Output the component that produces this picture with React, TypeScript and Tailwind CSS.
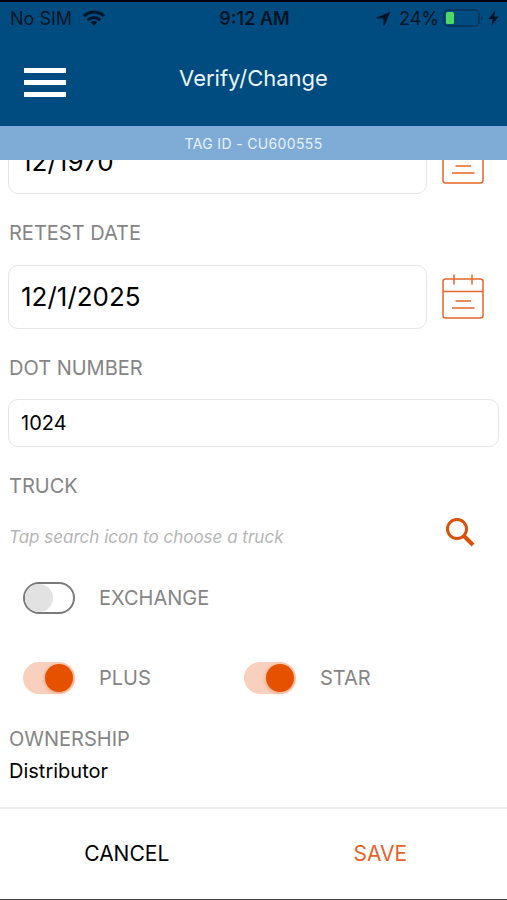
import { useState } from "react";

const label = "block pl-px text-[20px] leading-7 text-[#858585]";
const box = "min-w-0 rounded-[10px] border border-[#e6e6e6] bg-white px-3 text-black outline-none";

function WifiIcon() {
  return (
    <svg className="h-4 w-[22px]" viewBox="0 0 22 16" fill="none" stroke="currentColor" strokeWidth="3" aria-hidden="true">
      <path d="M1 6.2C6.6.6 15.4.6 21 6.2" />
      <path d="M4.8 10.2c3.5-3.5 8.900-3.500 12.400 0" />
      <path d="M11 15.800 7.600 12.300c1.900-1.900 4.900-1.900 6.800 0Z" fill="currentColor" stroke="none" />
    </svg>
  );
}

function LocationIcon() {
  return (
    <svg className="h-[15px] w-[15px]" viewBox="0 0 15 15" fill="currentColor" aria-hidden="true">
      <path d="M14.600.4 8.600 14.200c-.3.700-1.200.6-1.200-.2V7.600H1c-.8 0-.9-.9-.2-1.200L14.600.4Z" />
    </svg>
  );
}

function BatteryIcon() {
  return (
    <svg className="h-[18px] w-[41px]" viewBox="0 0 41 18" aria-hidden="true">
      <rect x="1" y="1" width="35" height="16" rx="4" fill="none" stroke="#0b3557" strokeWidth="1.500" />
      <rect x="3" y="3" width="8" height="12" rx="1.500" fill="#4cd964" />
      <path d="M38 6.500c2 .6 2 4.400 0 5Z" fill="#0b3557" />
    </svg>
  );
}

function BoltIcon() {
  return (
    <svg className="h-4 w-[11px]" viewBox="0 0 11 16" fill="currentColor" aria-hidden="true">
      <path d="M7.400 0 .5 9h4.200L3.400 16l7.100-9.500H6.200L7.400 0Z" />
    </svg>
  );
}

function CalendarIcon() {
  return (
    <svg className="h-[46px] w-[42px]" viewBox="0 0 42 46" fill="none" stroke="#e5672c" strokeWidth="1.500" aria-hidden="true">
      <rect x="1" y="5" width="40" height="39" rx="2.500" />
      <path d="M1 17.500h40M12 .5v10M30 .5v10M13.500 27h15.500M10 34h22.500" />
    </svg>
  );
}

function SearchIcon() {
  return (
    <svg className="h-[30px] w-[30px]" viewBox="0 0 30 30" fill="none" stroke="#d9500b" aria-hidden="true">
      <circle cx="12" cy="12" r="9.500" strokeWidth="3" />
      <path d="m19.500 19.500 8.500 8.500" strokeWidth="4" />
      <path d="m18 18 3 3" strokeWidth="2.500" />
    </svg>
  );
}

function DateInput({ id, name, initial }: { id: string; name: string; initial: string }) {
  const [value, setValue] = useState(initial);
  return (
    <div className="flex items-center gap-[15px] pr-[15px]">
      <input
        id={id}
        aria-label={name}
        value={value}
        onChange={(e) => setValue(e.target.value)}
        className={`${box} h-16 flex-1 pb-0.5 text-[26px]`}
      />
      <button type="button" aria-label={`Choose ${name.toLowerCase()}`}>
        <CalendarIcon />
      </button>
    </div>
  );
}

function Toggle({ name, initial = false }: { name: string; initial?: boolean }) {
  const [on, setOn] = useState(initial);
  return (
    <label className="flex items-center gap-6 text-[20px] leading-8 text-[#858585]">
      <input
        type="checkbox"
        role="switch"
        checked={on}
        onChange={() => setOn(!on)}
        className="flex h-8 w-[52px] shrink-0 appearance-none items-center rounded-full border-2 border-[#7b7b7b] bg-white before:h-7 before:w-7 before:rounded-full before:bg-[#e2e2e2] checked:justify-end checked:border-[#f9d0bd] checked:bg-[#f9d0bd] checked:before:bg-[#e65100] checked:before:shadow-[0_1px_4px_#e6510066]"
      />
      {name}
    </label>
  );
}

export default function App() {
  const [dot, setDot] = useState("1024");
  return (
    <div className="flex h-screen flex-col overflow-hidden border-t-2 border-b border-t-black border-b-[#444] bg-white font-['Inter','Liberation_Sans',sans-serif]">
      <header className="shrink-0 bg-[#004c80]">
        <div className="grid h-8 grid-cols-3 items-center pr-2 pl-[10px] text-[18px] text-[#021526]">
          <div className="flex items-center gap-[11px]">
            <span>No SIM</span>
            <WifiIcon />
          </div>
          <span className="text-center font-semibold">9:12 AM</span>
          <div className="flex items-center justify-end">
            <LocationIcon />
            <span className="mr-1 ml-2">24%</span>
            <BatteryIcon />
            <span className="ml-1"><BoltIcon /></span>
          </div>
        </div>
        <div className="grid h-[92px] grid-cols-[42px_1fr_42px] items-center px-6 pb-1">
          <button type="button" aria-label="Menu" className="mt-2 flex flex-col gap-[7px]">
            <span className="h-[5px] w-full bg-white" />
            <span className="h-[5px] w-full bg-white" />
            <span className="h-[5px] w-full bg-white" />
          </button>
          <h1 className="text-center text-[22px] text-[#eaf5fc]">Verify/Change</h1>
        </div>
        <div className="flex h-[34px] items-center justify-center bg-[#7fabd7] text-[14px] tracking-wide text-[#e6f2fd]">
          TAG ID - CU600555
        </div>
      </header>

      <main className="flex min-h-0 flex-1 flex-col justify-end overflow-hidden px-2 pb-[22px]">
        <form id="tag" className="flex shrink-0 flex-col gap-[25px]" onSubmit={(e) => e.preventDefault()}>
          <DateInput id="made" name="Manufacture date" initial="12/1970" />
          <div className="flex flex-col gap-[18px]">
            <label htmlFor="retest" className={label}>RETEST DATE</label>
            <DateInput id="retest" name="Retest date" initial="12/1/2025" />
          </div>
          <div>
            <label htmlFor="dot" className={label}>DOT NUMBER</label>
            <input
              id="dot"
              value={dot}
              onChange={(e) => setDot(e.target.value)}
              className={`${box} mt-[17px] h-12 w-full text-[20px]`}
            />
          </div>
          <div>
            <label htmlFor="truck" className={label}>TRUCK</label>
            <div className="mt-3 flex h-10 items-center pr-6 pl-px">
              <input
                id="truck"
                readOnly
                placeholder="Tap search icon to choose a truck"
                className="mt-3 min-w-0 flex-1 text-[17px] italic outline-none placeholder:text-[#b5b5b5]"
              />
              <button type="button" aria-label="Search trucks">
                <SearchIcon />
              </button>
            </div>
            <div className="mt-[30px] grid grid-cols-[221px_1fr] gap-y-12 pl-[15px]">
              <div className="col-span-2">
                <Toggle name="EXCHANGE" />
              </div>
              <Toggle name="PLUS" initial />
              <Toggle name="STAR" initial />
            </div>
            <dl className="mt-[31px]">
              <dt className={label}>OWNERSHIP</dt>
              <dd className="mt-1 pl-px text-[20px] leading-7 text-black">Distributor</dd>
            </dl>
          </div>
        </form>
      </main>

      <footer className="grid h-[92px] shrink-0 grid-cols-2 border-t-2 border-[#efefef] text-[21px]">
        <button type="button" className="text-black">CANCEL</button>
        <button type="submit" form="tag" className="text-[#e8622a]">SAVE</button>
      </footer>
    </div>
  );
}
